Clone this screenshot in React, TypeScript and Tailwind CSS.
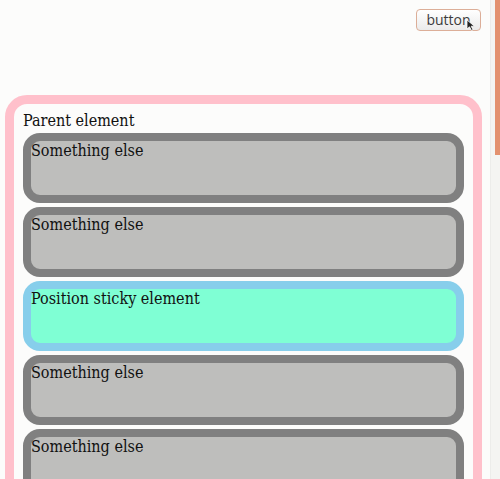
import React from "react";

const Box = ({ sticky, label }: { sticky?: boolean; label: string }) => (
  <div
    className={
      "h-[70px] mb-[4px] border-[8px] rounded-[17px] leading-[19px] " +
      (sticky ? "border-[#87ceeb] bg-[#7fffd4]" : "border-[#808080] bg-[#bebebc]")
    }
  >
    {label}
  </div>
);

export default function App() {
  return (
    <div
      className="w-[500px] h-[479px] overflow-hidden flex bg-[#fcfcfb] text-[#111]"
      style={{ fontFamily: '"DejaVu Serif Condensed", "DejaVu Serif", serif', fontStretch: "condensed" }}
    >
      <div className="flex-1 overflow-hidden">
        <div className="flex justify-end pt-[9px] pr-[9px]">
          <div className="relative">
            <button
              className="w-[65px] h-[22px] border border-[#dcae98] rounded-[4px] bg-gradient-to-b from-[#ffffff] to-[#ebebeb] text-[14px] text-[#3c3c3c] leading-none flex items-center justify-center pb-[1px]"
              style={{ fontFamily: '"Open Sans", sans-serif', fontStretch: "normal" }}
            >
              button
            </button>
            <svg
              className="absolute left-[50px] top-[10px]"
              width="10"
              height="13"
              viewBox="0 0 10 13"
            >
              <path d="M1 1 L1 10 L3.5 7.8 L5.5 11.5 L7 10.8 L5.2 7.2 L8.5 7.2 Z" fill="#222" stroke="#fff" strokeWidth="0.8" />
            </svg>
          </div>
        </div>
        <div className="mt-[64px] ml-[5px] w-[477px] border-[9px] border-[#ffc0cb] rounded-[22px] px-[9px] pt-[5px] text-[16px]">
          <div className="leading-6">Parent element</div>
          <Box label="Something else" />
          <Box label="Something else" />
          <Box sticky label="Position sticky element" />
          <Box label="Something else" />
          <Box label="Something else" />
          <Box label="Something else" />
        </div>
      </div>
      <div className="w-[10px] h-full bg-[#f4f4f2] border-l border-[#ececea] flex justify-end">
        <div className="w-[5px] h-[155px] bg-[#e3916f]" />
      </div>
    </div>
  );
}
